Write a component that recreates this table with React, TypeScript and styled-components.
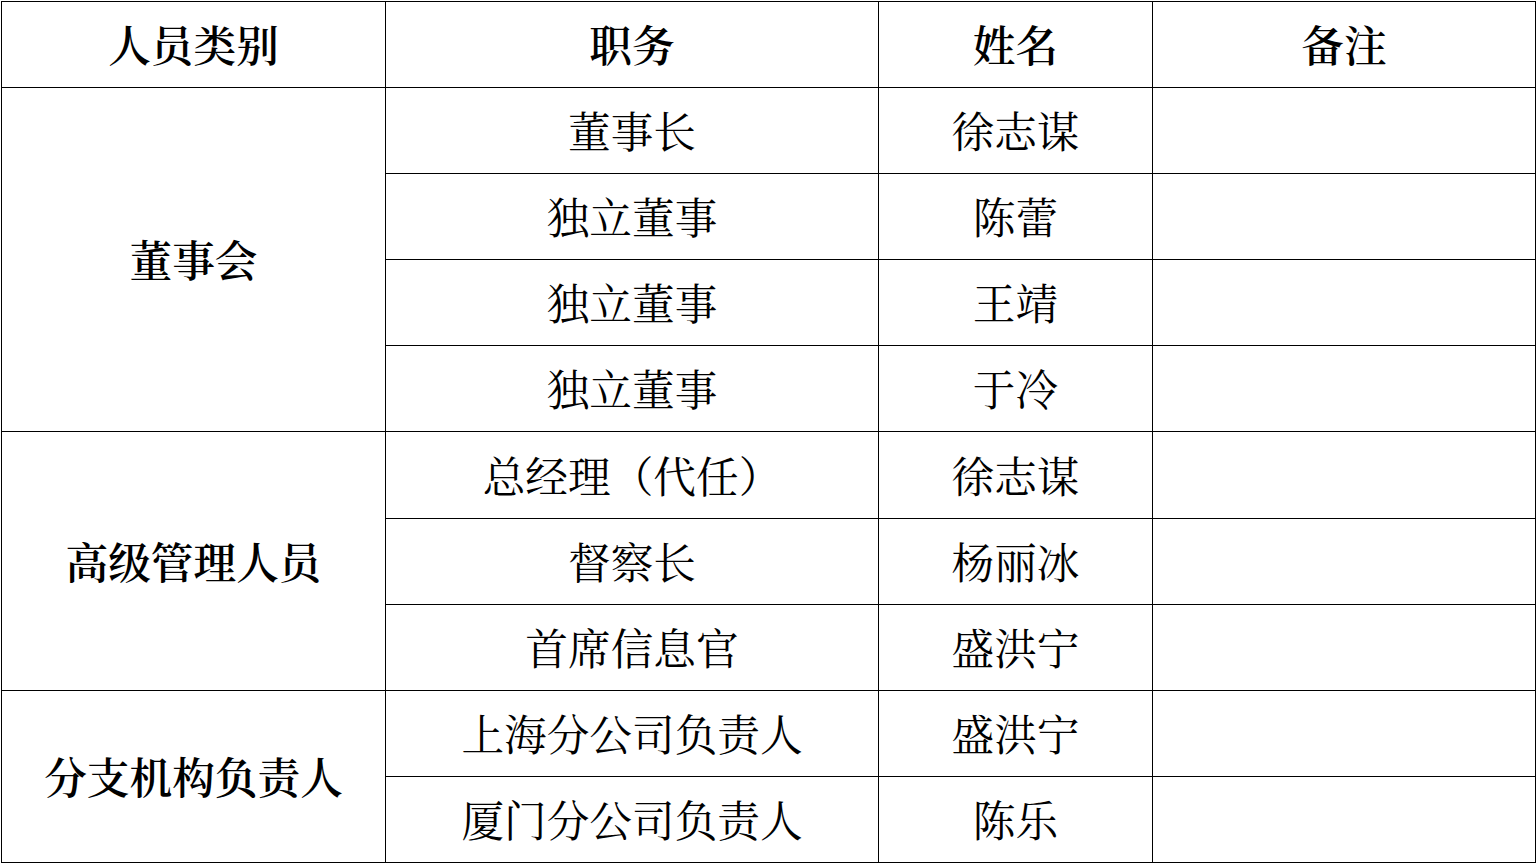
import React from "react";
import styled, { createGlobalStyle } from "styled-components";

const Global = createGlobalStyle`
  html, body { margin: 0; padding: 0; background: #fff; }
  body { font-family: "Noto Serif CJK SC", "Noto Sans CJK SC", serif; color: #000; }
`;

const Page = styled.div`
  padding: 1px 0 0 1px;
`;

const Table = styled.table`
  border-collapse: collapse;
  table-layout: fixed;
  width: 1534px;
  font-size: 42.67px;
`;

const Row = styled.tr<{ $tall?: boolean }>`
  height: ${(p) => (p.$tall ? 87 : 86)}px;
`;

const Cell = styled.td<{ $strong?: boolean }>`
  border: 1px solid #000;
  padding: 0;
  text-align: center;
  vertical-align: middle;
  font-weight: ${(p) => (p.$strong ? 600 : 400)};
  line-height: 1;
  white-space: nowrap;
`;

type Group = { name: string; rows: [string, string][] };

const groups: Group[] = [
  {
    name: "董事会",
    rows: [
      ["董事长", "徐志谋"],
      ["独立董事", "陈蕾"],
      ["独立董事", "王靖"],
      ["独立董事", "于冷"],
    ],
  },
  {
    name: "高级管理人员",
    rows: [
      ["总经理（代任）", "徐志谋"],
      ["督察长", "杨丽冰"],
      ["首席信息官", "盛洪宁"],
    ],
  },
  {
    name: "分支机构负责人",
    rows: [
      ["上海分公司负责人", "盛洪宁"],
      ["厦门分公司负责人", "陈乐"],
    ],
  },
];

export default function App() {
  return (
    <Page>
      <Global />
      <Table>
        <colgroup>
          <col style={{ width: 384 }} />
          <col style={{ width: 493 }} />
          <col style={{ width: 274 }} />
          <col style={{ width: 383 }} />
        </colgroup>
        <tbody>
          <Row>
            <Cell $strong>人员类别</Cell>
            <Cell $strong>职务</Cell>
            <Cell $strong>姓名</Cell>
            <Cell $strong>备注</Cell>
          </Row>
          {groups.map((g, gi) =>
            g.rows.map((r, i) => (
              <Row key={g.name + i} $tall={gi === 1 && i === 0}>
                {i === 0 && (
                  <Cell $strong rowSpan={g.rows.length}>
                    {g.name}
                  </Cell>
                )}
                <Cell>{r[0]}</Cell>
                <Cell>{r[1]}</Cell>
                <Cell />
              </Row>
            ))
          )}
        </tbody>
      </Table>
    </Page>
  );
}
